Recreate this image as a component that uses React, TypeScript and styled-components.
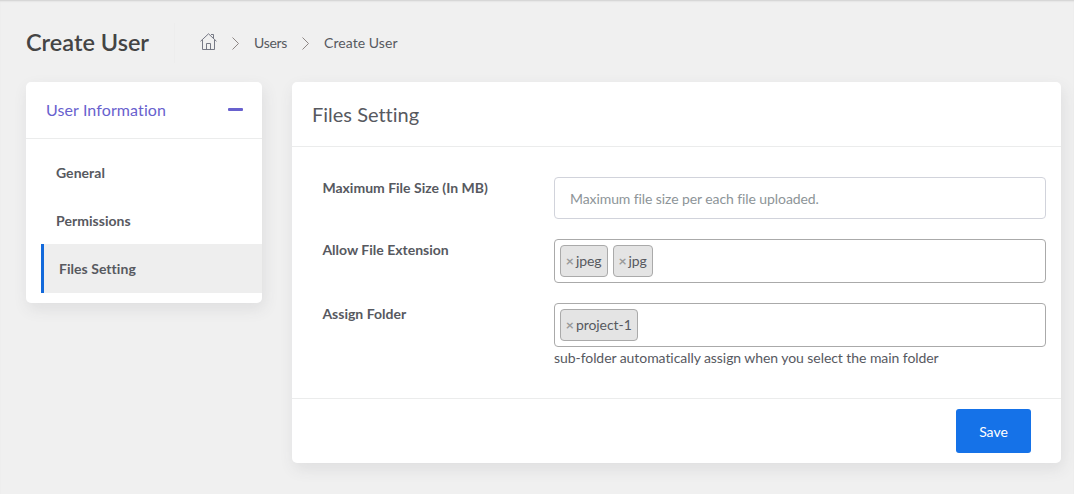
import React from "react";
import styled, { createGlobalStyle } from "styled-components";

const GlobalStyle = createGlobalStyle`
  *, *::before, *::after { box-sizing: border-box; }
  body {
    margin: 0;
    background: #f0f0f0;
    color: #57595f;
    font: 400 14px/21px Lato, "Liberation Sans", sans-serif;
    font-variant-ligatures: none;
    letter-spacing: -0.065px;
  }
  h1, h2, p, ul, ol { margin: 0; padding: 0; }
  ul, ol { list-style: none; }
`;

const Page = styled.div`
  height: 494px;
  padding: 0 13px 0 26px;
  overflow: hidden;
  box-shadow: inset 0 2px 2px -1px #cfcfcf;
`;

const PageHeader = styled.header`
  display: flex;
  align-items: center;
  height: 82px;
  padding-top: 3px;
`;

const PageTitle = styled.h1`
  width: 148px;
  padding-bottom: 2px;
  color: #444;
  font-size: 23.5px;
  line-height: 36px;
  font-weight: 600;
  letter-spacing: 0;
`;

const Breadcrumbs = styled.ol`
  display: flex;
  align-items: center;
  height: 40px;
  padding-left: 25px;
  border-left: 1px solid #ededed;
`;

const Crumb = styled.li<{ $spacing?: number }>`
  display: flex;
  align-items: center;
  white-space: nowrap;
  letter-spacing: ${(p) => p.$spacing ?? 0}px;
`;

const HomeIcon = styled.svg`
  display: block;
  width: 17px;
  height: 17px;
  margin-top: -2px;
`;

const ChevronIcon = styled.svg`
  display: block;
  width: 7px;
  height: 13px;
  margin: 1px 15px 0;
`;

const Columns = styled.div`
  display: flex;
  align-items: flex-start;
  gap: 30px;
`;

const Card = styled.section<{ $width: number }>`
  flex: 0 0 ${(p) => p.$width}px;
  background: #fff;
  border-radius: 5px;
  box-shadow: 2px 6px 15px 0 rgba(69, 65, 78, 0.1);
`;

const Accordion = styled.header`
  display: flex;
  align-items: center;
  justify-content: space-between;
  height: 57px;
  padding: 0 19px 2px 20px;
  border-bottom: 1px solid #ebecec;
  color: #6861ce;
  font-size: 16px;
  letter-spacing: 0.11px;
`;

const CollapseMark = styled.span`
  width: 15px;
  height: 3px;
  margin-top: 1px;
  border-radius: 1px;
  background: #6861ce;
`;

const Menu = styled.ul`
  padding: 10px 0 10px 15px;
`;

const MenuItem = styled.li<{ $active?: boolean }>`
  height: ${(p) => (p.$active ? 49 : 48)}px;
  margin-top: ${(p) => (p.$active ? -1 : 0)}px;
  padding-left: 15px;
  border-left: ${(p) => (p.$active ? "3px solid #1269db" : "0")};
  background: ${(p) => (p.$active ? "#eee" : "transparent")};
  font-weight: 700;
  letter-spacing: 0.04px;
  line-height: 48px;
  padding-top: ${(p) => (p.$active ? 1 : 0)}px;
`;

const CardTitle = styled.h2`
  height: 65px;
  padding: 0 20px;
  border-bottom: 1px solid #ebecec;
  font-size: 20px;
  font-weight: 400;
  line-height: 64px;
  letter-spacing: 0;
`;

const Form = styled.div`
  display: flex;
  flex-direction: column;
  gap: 20px;
  height: 251px;
  padding: 30px 15px 0 30px;
`;

const Field = styled.div`
  display: grid;
  grid-template-columns: 232px 1fr;
`;

const Label = styled.label`
  padding-left: 0.4px;
  font-weight: 700;
  letter-spacing: 0;
`;

const TextInput = styled.input`
  display: block;
  width: 100%;
  height: 42px;
  padding: 0 15px;
  border: 1px solid #d1d3db;
  border-radius: 4px;
  background: #fff;
  color: #575962;
  font: inherit;
  letter-spacing: -0.09px;
  outline: none;
  &::placeholder { color: #8d9498; opacity: 1; }
`;

const TagBox = styled.div`
  display: flex;
  gap: 5px;
  height: 44px;
  padding: 5px;
  border: 1px solid #aaa;
  border-radius: 4px;
`;

const Tag = styled.span`
  display: flex;
  align-items: center;
  height: 32px;
  padding: 0 5px 2px;
  border: 1px solid #aaa;
  border-radius: 4px;
  background: #e4e4e4;
`;

const TagRemove = styled.span`
  margin-right: 2px;
  margin-left: -0.15px;
  color: #999;
  font-weight: 700;
`;

const Hint = styled.p`
  line-height: 21px;
`;

const CardFooter = styled.footer`
  display: flex;
  justify-content: flex-end;
  height: 65px;
  padding: 10px 30px;
  border-top: 1px solid #ebecec;
`;

const SaveButton = styled.button`
  width: 75px;
  height: 44px;
  padding: 0;
  border: 0;
  border-radius: 3px;
  background: #1572e8;
  color: #fff;
  font: inherit;
`;

const Chevron = () => (
  <ChevronIcon viewBox="0 0 7 13" fill="none" stroke="#8c8583">
    <path d="M.5.5 6.5 6.5.5 12.5" />
  </ChevronIcon>
);

const Tags = ({ values }: { values: string[] }) => (
  <TagBox>
    {values.map((value) => (
      <Tag key={value}>
        <TagRemove>×</TagRemove>
        {value}
      </Tag>
    ))}
  </TagBox>
);

export default function App() {
  return (
    <>
      <GlobalStyle />
      <Page>
        <PageHeader>
          <PageTitle>Create User</PageTitle>
          <Breadcrumbs>
            <Crumb>
              <HomeIcon viewBox="0 0 17 17" fill="none" stroke="#686b78" strokeWidth=".9">
                <path d="M.5 8.3 8.5.8l8 7.5M2.5 7v9.5h12V7M6.5 16.5v-6h4v6M11 1.5h2.5V5" />
              </HomeIcon>
            </Crumb>
            <Crumb $spacing={-0.3}><Chevron />Users</Crumb>
            <Crumb $spacing={0.06}><Chevron />Create User</Crumb>
          </Breadcrumbs>
        </PageHeader>
        <Columns>
          <Card $width={236}>
            <Accordion>
              User Information
              <CollapseMark />
            </Accordion>
            <Menu>
              <MenuItem>General</MenuItem>
              <MenuItem>Permissions</MenuItem>
              <MenuItem $active>Files Setting</MenuItem>
            </Menu>
          </Card>
          <Card $width={769}>
            <CardTitle>Files Setting</CardTitle>
            <Form>
              <Field>
                <Label htmlFor="size">Maximum File Size (In MB)</Label>
                <TextInput id="size" placeholder="Maximum file size per each file uploaded." />
              </Field>
              <Field>
                <Label>Allow File Extension</Label>
                <Tags values={["jpeg", "jpg"]} />
              </Field>
              <Field>
                <Label>Assign Folder</Label>
                <div>
                  <Tags values={["project-1"]} />
                  <Hint>sub-folder automatically assign when you select the main folder</Hint>
                </div>
              </Field>
            </Form>
            <CardFooter>
              <SaveButton type="button">Save</SaveButton>
            </CardFooter>
          </Card>
        </Columns>
      </Page>
    </>
  );
}
